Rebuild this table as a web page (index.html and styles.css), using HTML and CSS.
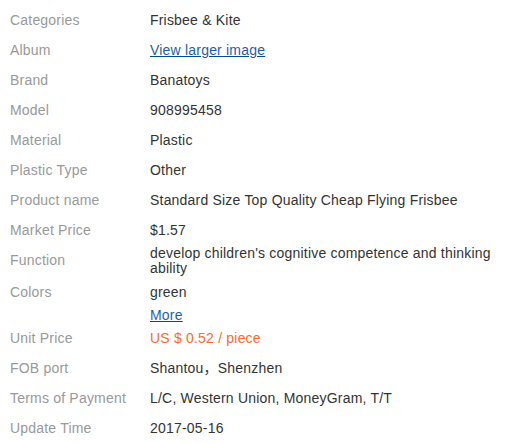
FILE: index.html
```html
<!DOCTYPE html>
<html>
<head>
<meta charset="utf-8">
<link rel="stylesheet" href="styles.css">
</head>
<body>
<div class="attrs">
  <div class="row"><div class="key">Categories</div><div class="val">Frisbee &amp; Kite</div></div>
  <div class="row"><div class="key">Album</div><div class="val"><a class="link" href="#">View larger image</a></div></div>
  <div class="row"><div class="key">Brand</div><div class="val">Banatoys</div></div>
  <div class="row"><div class="key">Model</div><div class="val">908995458</div></div>
  <div class="row"><div class="key">Material</div><div class="val">Plastic</div></div>
  <div class="row"><div class="key">Plastic Type</div><div class="val">Other</div></div>
  <div class="row"><div class="key">Product name</div><div class="val">Standard Size Top Quality Cheap Flying Frisbee</div></div>
  <div class="row"><div class="key">Market Price</div><div class="val">$1.57</div></div>
  <div class="row"><div class="key">Function</div><div class="val multi">develop children's cognitive competence and thinking ability</div></div>
  <div class="row"><div class="key">Colors</div><div class="val"><div>green</div><div class="more"><a class="link" href="#">More</a></div></div></div>
  <div class="row"><div class="key">Unit Price</div><div class="val price">US $ 0.52 / piece</div></div>
  <div class="row"><div class="key">FOB port</div><div class="val">Shantou，Shenzhen</div></div>
  <div class="row"><div class="key">Terms of Payment</div><div class="val">L/C, Western Union, MoneyGram, T/T</div></div>
  <div class="row"><div class="key">Update Time</div><div class="val">2017-05-16</div></div>
</div>
</body>
</html>
```

FILE: styles.css
```css
html, body {
  margin: 0;
  padding: 0;
  background: #fff;
}
body {
  font-family: Arial, "Liberation Sans", "Noto Sans CJK SC", sans-serif;
  font-size: 14px;
  color: #333;
  letter-spacing: 0.2px;
}
.attrs {
  padding: 5px 0 0 10px;
}
.row {
  display: flex;
  align-items: flex-start;
}
.key {
  width: 140px;
  flex: none;
  line-height: 30px;
  color: #999;
}
.val {
  line-height: 30px;
  width: 350px;
}
.val.multi {
  line-height: 15px;
  padding: 1px 0;
}
.more {
  line-height: 16px;
}
.link {
  color: #1f5eaa;
  text-decoration: underline;
  text-decoration-color: #004b91;
}
.price {
  color: #ff6a26;
}
```
